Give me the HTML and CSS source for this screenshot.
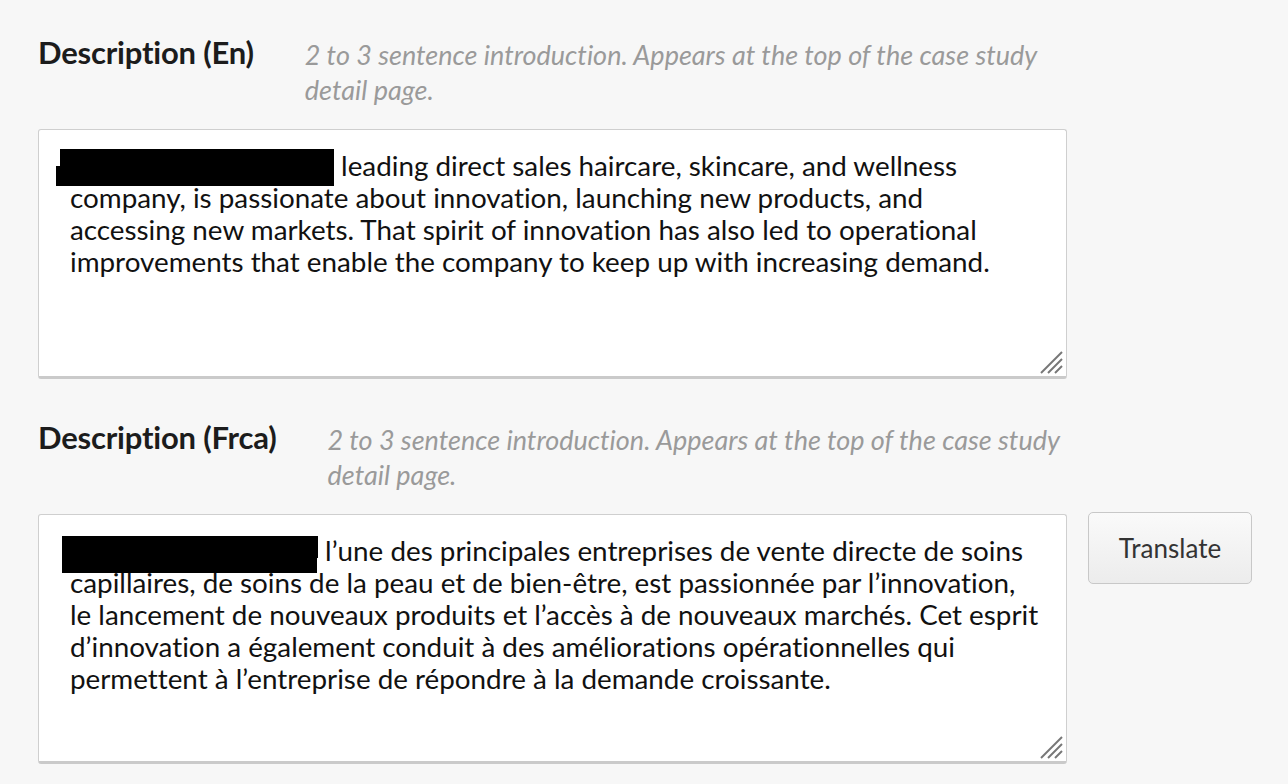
FILE: index.html
```html
<!DOCTYPE html>
<html>
<head>
<meta charset="utf-8">
<link rel="stylesheet" href="styles.css">
</head>
<body>
<div class="page">
  <section class="field">
    <div class="head">
      <h2 class="label">Description (En)</h2>
      <p class="hint">2 to 3 sentence introduction. Appears at the top of the case study detail page.</p>
    </div>
    <div class="row">
      <div class="area">
        <div class="text"><span class="redact en"><i class="r1"></i><i class="r2"></i></span> leading direct sales haircare, skincare, and wellness<br>company, is passionate about innovation, launching new products, and<br>accessing new markets. That spirit of innovation has also led to operational<br>improvements that enable the company to keep up with increasing demand.</div>
        <svg class="grip" width="26" height="26" viewBox="0 0 26 26"><g stroke="#777" stroke-width="2"><line x1="3" y1="24" x2="24" y2="3"/><line x1="10" y1="24" x2="24" y2="10"/><line x1="17" y1="24" x2="24" y2="17"/></g></svg>
      </div>
    </div>
  </section>
  <section class="field">
    <div class="head">
      <h2 class="label">Description (Frca)</h2>
      <p class="hint">2 to 3 sentence introduction. Appears at the top of the case study detail page.</p>
    </div>
    <div class="row">
      <div class="area">
        <div class="text"><span class="redact fr"><i class="r1"></i><i class="r2"></i></span> l’une des principales entreprises de vente directe de soins<br>capillaires, de soins de la peau et de bien-être, est passionnée par l’innovation,<br>le lancement de nouveaux produits et l’accès à de nouveaux marchés. Cet esprit<br>d’innovation a également conduit à des améliorations opérationnelles qui<br>permettent à l’entreprise de répondre à la demande croissante.</div>
        <svg class="grip" width="26" height="26" viewBox="0 0 26 26"><g stroke="#777" stroke-width="2"><line x1="3" y1="24" x2="24" y2="3"/><line x1="10" y1="24" x2="24" y2="10"/><line x1="17" y1="24" x2="24" y2="17"/></g></svg>
      </div>
      <button class="btn">Translate</button>
    </div>
  </section>
</div>
</body>
</html>
```

FILE: styles.css
```css
html, body {
  margin: 0;
  padding: 0;
  background: #f7f7f7;
}
body {
  font-family: Lato, "Open Sans", sans-serif;
  color: #111;
  font-variant-ligatures: none;
}
.page {
  padding: 31px 0 0 38px;
}
.field {
  margin-bottom: 37px;
}
.head {
  display: flex;
  gap: 51px;
  align-items: flex-start;
}
.label {
  margin: 0;
  font-size: 31px;
  font-weight: 700;
  line-height: 42px;
  color: #1c1c1c;
  white-space: nowrap;
  letter-spacing: -0.2px;
}
.hint {
  margin: 6px 0 0;
  width: 760px;
  font-size: 27px;
  font-style: italic;
  line-height: 35px;
  color: #9a9a9a;
  letter-spacing: 0;
}
.row {
  display: flex;
  align-items: flex-start;
  gap: 21px;
  margin-top: 22px;
}
.area {
  position: relative;
  box-sizing: border-box;
  width: 1029px;
  height: 250px;
  background: #fff;
  border: 1px solid #cfcfcf;
  border-bottom: 3px solid #cacaca;
  border-radius: 3px;
  padding: 20px 4px 0 31px;
}
.text {
  font-size: 27.8px;
  line-height: 32px;
  color: #111;
  white-space: nowrap;
}
.redact {
  display: inline-block;
  position: relative;
  width: 264px;
  height: 20px;
}
.redact i {
  position: absolute;
  background: #000;
}
.redact.en .r1 { left: -10px; top: -7px; width: 274px; height: 20px; }
.redact.en .r2 { left: -14px; top: 10px; width: 278px; height: 20px; }
.redact.fr { width: 248px; }
.redact.fr .r1 { left: -8px; top: -5px; width: 256px; height: 22px; }
.redact.fr .r2 { left: -8px; top: 12px; width: 255px; height: 20px; }
.grip {
  position: absolute;
  right: 2px;
  bottom: 1px;
}
.btn {
  box-sizing: border-box;
  width: 164px;
  height: 72px;
  margin-top: -2px;
  font-family: Lato, "Open Sans", sans-serif;
  font-size: 26px;
  color: #333;
  background: linear-gradient(#fafafa, #ececec);
  border: 1px solid #c8c8c8;
  border-radius: 5px;
}
```
